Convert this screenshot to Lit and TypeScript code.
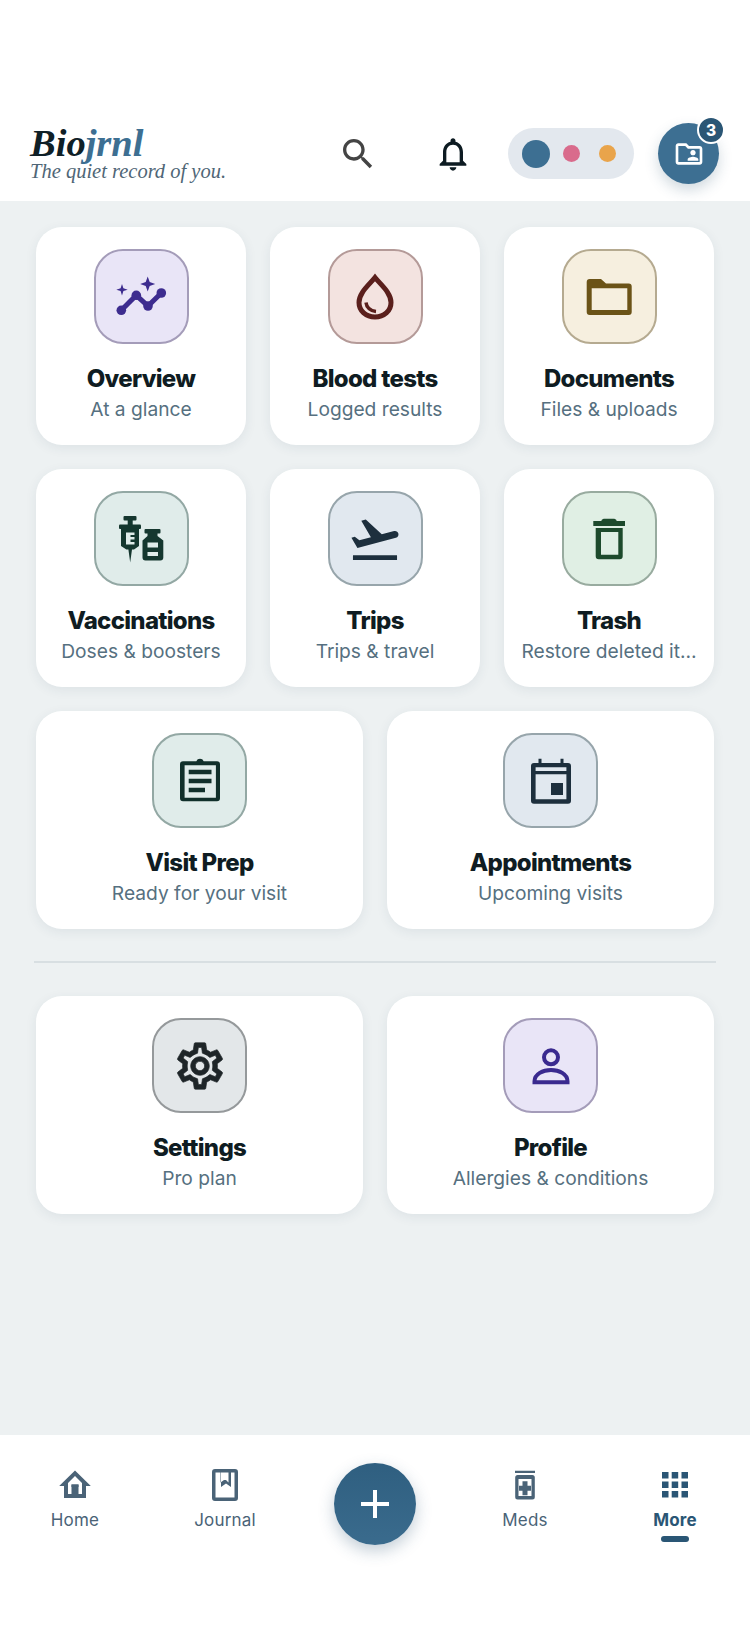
import { LitElement, html, css, svg } from 'lit';
import { customElement } from 'lit/decorators.js';

// 60x60 art for the tiles, drawn around the middle of the tile
const tileIcons = {
  overview: svg`<g fill="#3d2c8f">
      <path d="M36.700 9.500l2 5.500 5.500 2-5.500 2-2 5.500-2-5.500-5.500-2 5.500-2z"/>
      <path d="M11 17l1.400 4.300 4.300 1.400-4.300 1.400-1.400 4.300-1.400-4.300-4.300-1.400 4.300-1.400z"/>
      <circle cx="10.300" cy="43.300" r="4.800"/><circle cx="25.300" cy="28.300" r="4.800"/>
      <circle cx="37" cy="39" r="4.800"/><circle cx="50.300" cy="26" r="4.800"/>
    </g>
    <path d="M10.300 43.300L25.300 28.300 37 39 50.300 26" fill="none" stroke="#3d2c8f" stroke-width="5"/>`,
  blood: svg`<path d="M30 10.500C24.500 17.500 14 25.500 14 35.500 14 44 21 50 30 50s16-6 16-14.500C46 25.500 35.500 17.500 30 10.500z" fill="none" stroke="#5a1f1c" stroke-width="5"/>
    <path d="M21 35.500c.5 5 4.500 8.500 10 9" fill="none" stroke="#5a1f1c" stroke-width="3.500"/>`,
  documents: svg`<path fill="#6b5317" fill-rule="evenodd" d="M10.700 12H22l5 4.500h22.700a3 3 0 0 1 3 3V45a3 3 0 0 1-3 3h-39a3 3 0 0 1-3-3V15a3 3 0 0 1 3-3zM12.700 21.300V43h35.600V21.300z"/>`,
  vaccinations: svg`<g fill="#15372f">
      <rect x="12.500" y="7" width="13" height="4.500" rx="1"/><rect x="16.700" y="11" width="5" height="6"/>
      <rect x="8" y="15.500" width="22" height="4.500" rx="1"/>
      <path fill-rule="evenodd" d="M10 19h18v18l-5 3.500h-2l-1.800 13-1.800-13h-2L10 37zM15 23.500v12h8.500V33h-4v-2.500h4V28h-4v-2h4v-2.500z"/>
      <rect x="33.500" y="20" width="16" height="4.600" rx="1"/>
      <path fill-rule="evenodd" d="M36.500 24h10v3l5.800 4.500v17a3 3 0 0 1-3 3H34.500a3 3 0 0 1-3-3v-17l5-4.500zM36.500 33.500v5h10.500v-5zM36.500 43v4h10.500v-4z"/>
    </g>`,
  trips: svg`<g transform="translate(2.160 2.160) scale(2.320)"><path fill="#1d2f3d" d="M2.500 19h19v2h-19v-2zm19.570-9.360c-.21-.8-1.040-1.280-1.840-1.060L14.920 10l-6.900-6.430-1.930.51 4.140 7.170-4.970 1.330-1.970-1.540-1.450.39 2.590 4.490L21 11.490c.81-.23 1.280-1.050 1.070-1.850z"/></g>`,
  trash: svg`<path fill="#1d4a2c" fill-rule="evenodd" d="M22.300 12c.5-2 2-2.300 3.500-2.300h8.400c1.500 0 3 .3 3.500 2.300h8.300v5H14.300v-5zM16.700 19h27v28.300a3 3 0 0 1-3 3h-21a3 3 0 0 1-3-3zM22 23v22.700h17.300V23z"/>`,
  visit: svg`<path fill="#11302b" fill-rule="evenodd" d="M26.300 10.300a4 4 0 0 1 7.400 0H47a3 3 0 0 1 3 3v34a3 3 0 0 1-3 3H13a3 3 0 0 1-3-3v-34a3 3 0 0 1 3-3zM14.600 14.300v32.400h31.300V14.300zM18.700 18.700h22.800v4.600H18.700zM18.700 27.700h22.800v4.600H18.700zM18.700 36.700H35v4.600H18.700z"/>`,
  appointments: svg`<path fill="#1d2f3d" fill-rule="evenodd" d="M17.500 7.700h3V12h19V7.700h3V12H47a3 3 0 0 1 3 3v34.700a3 3 0 0 1-3 3H13a3 3 0 0 1-3-3V15a3 3 0 0 1 3-3h4.500zM14.600 16.300V20h30.800v-3.700zM14.600 23.300v25h30.800v-25zM30 32h12v12H30z"/>`,
  settings: svg`<g transform="translate(2.160 2.160) scale(2.320)"><path fill="#1e2528" stroke="#1e2528" stroke-width=".3" d="M19.430 12.980c.04-.32.07-.64.07-.98 0-.34-.03-.66-.07-.98l2.110-1.650c.19-.15.24-.42.120-.64l-2-3.460c-.09-.16-.26-.25-.44-.25-.06 0-.12.01-.17.03l-2.490 1c-.52-.4-1.080-.73-1.690-.98l-.38-2.650C14.460 2.180 14.250 2 14 2h-4c-.25 0-.46.18-.49.42l-.38 2.650c-.61.25-1.170.59-1.690.98l-2.490-1c-.06-.02-.12-.03-.18-.03-.17 0-.34.09-.43.25l-2 3.460c-.13.22-.07.49.12.64l2.110 1.650c-.04.32-.07.65-.07.98 0 .33.03.66.07.98l-2.110 1.650c-.19.15-.24.42-.12.64l2 3.460c.09.16.26.25.44.25.06 0 .12-.01.17-.03l2.490-1c.52.4 1.080.73 1.690.98l.38 2.650c.03.24.24.42.49.42h4c.25 0 .46-.18.49-.42l.38-2.650c.61-.25 1.170-.59 1.690-.98l2.490 1c.06.02.12.03.18.03.17 0 .34-.09.43-.25l2-3.460c.12-.22.07-.49-.12-.64l-2.110-1.650zm-1.980-1.710c.04.31.05.52.05.73 0 .21-.02.43-.05.73l-.14 1.130.89.7 1.080.84-.7 1.210-1.270-.51-1.040-.42-.9.68c-.43.32-.84.56-1.250.73l-1.060.43-.16 1.130-.2 1.350h-1.400l-.19-1.350-.16-1.130-1.060-.43c-.43-.18-.83-.41-1.230-.71l-.91-.7-1.060.43-1.270.51-.7-1.210 1.080-.84.89-.7-.14-1.130c-.03-.31-.05-.54-.05-.74s.02-.43.05-.73l.14-1.130-.89-.7-1.080-.84.7-1.210 1.270.51 1.040.42.9-.68c.43-.32.84-.56 1.250-.73l1.060-.43.16-1.130.2-1.350h1.390l.19 1.350.16 1.130 1.060.43c.43.18.83.41 1.230.71l.91.7 1.060-.43 1.270-.51.7 1.210-1.070.85-.89.7.14 1.130zM12 8c-2.210 0-4 1.790-4 4s1.790 4 4 4 4-1.790 4-4-1.790-4-4-4zm0 6c-1.100 0-2-.9-2-2s.9-2 2-2 2 .9 2 2-.9 2-2 2z"/></g>`,
  profile: svg`<g fill="none" stroke="#3a2a8f" stroke-width="4"><circle cx="30" cy="21.300" r="7"/><path d="M13.500 46.300v-1C13.500 38 22 34 30 34s16.500 4 16.500 11.300v1z"/></g>`,
};

// 36x36 art for the tab bar
const navIcons = {
  home: svg`<path fill="#4a6377" fill-rule="evenodd" d="M18 4.500L33.800 20H29v12H7V20H2.200zM18 10l-7 7v11h3.500v-9.500h7V28H25V17z"/><rect x="14.500" y="18.500" width="7" height="2.500" fill="#4a6377"/>`,
  journal: svg`<path fill="#4a6377" fill-rule="evenodd" d="M8 3h20a3 3 0 0 1 3 3v26a3 3 0 0 1-3 3H8a3 3 0 0 1-3-3V6a3 3 0 0 1 3-3zM8.500 6.500v25h19v-25h-3.500v14.500l-5-3.500-5 3.500V6.500zM13.500 6.500v10l3.500-2.500h2l2.500 2.500v-10z"/>`,
  meds: svg`<path fill="#4a6377" fill-rule="evenodd" d="M8 4.700h20V7H8zM10.700 9h14.600a2.500 2.500 0 0 1 2.500 2.500V31a2.500 2.500 0 0 1-2.500 2.500H10.700A2.500 2.500 0 0 1 8.200 31V11.500A2.500 2.500 0 0 1 10.700 9zM11.500 13v17h13V13zM15.500 15.200h5v4.500H25v5h-4.500v4.500h-5v-4.500H11v-5h4.500z"/>`,
  more: svg`<g fill="#2a5675"><rect x="5" y="6" width="6.500" height="6.500"/><rect x="14.700" y="6" width="6.500" height="6.500"/><rect x="24.500" y="6" width="6.500" height="6.500"/><rect x="5" y="15.500" width="6.500" height="6.500"/><rect x="14.700" y="15.500" width="6.500" height="6.500"/><rect x="24.500" y="15.500" width="6.500" height="6.500"/><rect x="5" y="25" width="6.500" height="6.500"/><rect x="14.700" y="25" width="6.500" height="6.500"/><rect x="24.500" y="25" width="6.500" height="6.500"/></g>`,
};

type Tile = { icon: keyof typeof tileIcons; title: string; sub: string; tone: string };

const topTiles: Tile[] = [
  { icon: 'overview', title: 'Overview', sub: 'At a glance', tone: 'violet' },
  { icon: 'blood', title: 'Blood tests', sub: 'Logged results', tone: 'rose' },
  { icon: 'documents', title: 'Documents', sub: 'Files & uploads', tone: 'sand' },
  { icon: 'vaccinations', title: 'Vaccinations', sub: 'Doses & boosters', tone: 'teal' },
  { icon: 'trips', title: 'Trips', sub: 'Trips & travel', tone: 'slate' },
  { icon: 'trash', title: 'Trash', sub: 'Restore deleted it…', tone: 'green' },
];
const midTiles: Tile[] = [
  { icon: 'visit', title: 'Visit Prep', sub: 'Ready for your visit', tone: 'teal' },
  { icon: 'appointments', title: 'Appointments', sub: 'Upcoming visits', tone: 'slate' },
];
const lowTiles: Tile[] = [
  { icon: 'settings', title: 'Settings', sub: 'Pro plan', tone: 'grey' },
  { icon: 'profile', title: 'Profile', sub: 'Allergies & conditions', tone: 'violet' },
];

@customElement('app-root')
export class AppRoot extends LitElement {
  static styles = css`
    :host {
      display: flex;
      flex-direction: column;
      width: 750px;
      height: 1630px;
      background: #edf1f2;
      font-family: Inter, "Noto Sans", sans-serif;
      overflow: hidden;
    }
    .top {
      display: flex;
      align-items: center;
      height: 61px;
      padding: 123px 31px 17px 30px;
      background: #fff;
    }
    .logo {
      flex: 1;
      padding-bottom: 1px;
      font-family: "Liberation Serif", serif;
      font-style: italic;
    }
    .name {
      font-size: 38.500px;
      font-weight: 700;
      line-height: 36px;
      color: #0f2027;
    }
    .name span {
      color: #3d6f92;
    }
    .tag {
      font-size: 20.500px;
      line-height: 20px;
      color: #4f6676;
    }
    .tool {
      display: flex;
      justify-content: center;
      width: 95px;
    }
    .pill {
      display: flex;
      align-items: center;
      gap: 19px;
      box-sizing: border-box;
      width: 126px;
      height: 51px;
      margin-left: 8px;
      padding-left: 14px;
      border-radius: 26px;
      background: #e3e8ee;
    }
    .pill i {
      width: 17px;
      height: 17px;
      border-radius: 50%;
    }
    .pill i.big {
      width: 28px;
      height: 28px;
      margin-right: -6px;
      background: #3d6f92;
    }
    .pill i.pink {
      background: #d96b8c;
    }
    .pill i.amber {
      background: #e9a44b;
    }
    .files {
      position: relative;
      display: flex;
      align-items: center;
      justify-content: center;
      width: 61px;
      height: 61px;
      margin-left: 24px;
      border-radius: 50%;
      background: #3d6f92;
      box-shadow: 0 6px 14px rgba(40, 80, 110, 0.22);
    }
    .badge {
      position: absolute;
      top: -7px;
      right: -6px;
      display: flex;
      align-items: center;
      justify-content: center;
      box-sizing: border-box;
      width: 28px;
      height: 28px;
      border: 2.500px solid #fff;
      border-radius: 50%;
      background: #2a5675;
      color: #fff;
      font-size: 15.500px;
      font-weight: 800;
    }
    main {
      flex: 1;
      display: flex;
      flex-direction: column;
      gap: 24px;
      padding: 26px 36px 0;
    }
    .grid {
      display: grid;
      gap: 24px;
    }
    .three {
      grid-template-columns: repeat(3, 210px);
    }
    .two {
      grid-template-columns: repeat(2, 327px);
    }
    hr {
      width: 682px;
      height: 2px;
      margin: 8px -2px 9px;
      border: 0;
      background: #d8dfe2;
    }
    .card {
      display: flex;
      flex-direction: column;
      align-items: center;
      box-sizing: border-box;
      height: 218px;
      min-width: 0;
      padding: 22px 16px 0;
      border-radius: 26px;
      background: #fff;
      box-shadow: 0 3px 12px rgba(40, 70, 90, 0.08);
    }
    .box {
      display: flex;
      align-items: center;
      justify-content: center;
      box-sizing: border-box;
      width: 95px;
      height: 95px;
      border: 2px solid;
      border-radius: 29px;
    }
    .violet { background: #e9e5f7; border-color: #a49cb9; }
    .rose { background: #f3e3e0; border-color: #b49a98; }
    .sand { background: #f6efdf; border-color: #b5aa90; }
    .teal { background: #e0ecea; border-color: #93a8a4; }
    .slate { background: #e1e8ef; border-color: #97a5ab; }
    .green { background: #e0efe4; border-color: #98ab9f; }
    .grey { background: #e3e7e9; border-color: #95999b; }
    .title {
      margin-top: 20px;
      font-size: 24px;
      font-weight: 800;
      line-height: 30px;
      letter-spacing: -0.7px;
      color: #0f1c22;
    }
    .sub {
      margin-top: 2px;
      font-size: 19.200px;
      line-height: 26px;
      white-space: nowrap;
      color: #567080;
    }
    nav {
      display: grid;
      grid-template-columns: repeat(5, 150px);
      height: 195px;
      background: #fff;
    }
    .tab {
      display: flex;
      flex-direction: column;
      align-items: center;
      padding-top: 31px;
      font-size: 17px;
      line-height: 20px;
      letter-spacing: 0.2px;
      color: #4a6377;
    }
    .tab span {
      margin-top: 8px;
    }
    .tab.on {
      font-weight: 700;
      color: #2a5675;
    }
    .tab b {
      width: 28px;
      height: 5.500px;
      margin-top: 6px;
      border-radius: 3px;
      background: #2a5675;
    }
    .fab {
      display: flex;
      align-items: center;
      justify-content: center;
      justify-self: center;
      width: 82px;
      height: 82px;
      margin-top: 28px;
      border-radius: 50%;
      background: linear-gradient(#2f5f80, #3a6b8d);
      box-shadow: 0 6px 16px rgba(40, 80, 110, 0.28);
    }
  `;

  private renderTile(t: Tile) {
    return html`
      <div class="card">
        <div class="box ${t.tone}">
          <svg width="60" height="60" viewBox="0 0 60 60">${tileIcons[t.icon]}</svg>
        </div>
        <div class="title">${t.title}</div>
        <div class="sub">${t.sub}</div>
      </div>
    `;
  }

  private renderTab(icon: keyof typeof navIcons, label: string, on = false) {
    return html`
      <div class="tab ${on ? 'on' : ''}">
        <svg width="36" height="36" viewBox="0 0 36 36">${navIcons[icon]}</svg>
        <span>${label}</span>
        ${on ? html`<b></b>` : ''}
      </div>
    `;
  }

  render() {
    return html`
      <header class="top">
        <div class="logo">
          <div class="name">Bio<span>jrnl</span></div>
          <div class="tag">The quiet record of you.</div>
        </div>
        <div class="tool">
          <svg width="40" height="40" viewBox="0 0 24 24"><path fill="#444" d="M15.500 14h-.79l-.28-.27C15.410 12.590 16 11.110 16 9.500 16 5.910 13.090 3 9.500 3S3 5.910 3 9.500 5.910 16 9.500 16c1.610 0 3.090-.59 4.230-1.570l.27.28v.79l5 4.990L20.490 19l-4.990-5zm-6 0C7.010 14 5 11.990 5 9.500S7.010 5 9.500 5 14 7.010 14 9.500 11.990 14 9.500 14z"/></svg>
        </div>
        <div class="tool">
          <svg width="40" height="40" viewBox="0 0 24 24"><path fill="#0d1b22" d="M12 22c1.100 0 2-.9 2-2h-4c0 1.100.9 2 2 2zm6-6v-5c0-3.070-1.630-5.640-4.500-6.320V4c0-.83-.67-1.500-1.500-1.500s-1.500.67-1.500 1.500v.68C7.640 5.360 6 7.920 6 11v5l-2 2v1h16v-1l-2-2zm-2 1H8v-6c0-2.480 1.510-4.500 4-4.500s4 2.020 4 4.500v6z"/></svg>
        </div>
        <div class="pill"><i class="big"></i><i class="pink"></i><i class="amber"></i></div>
        <div class="files">
          <svg width="32" height="32" viewBox="0 0 24 24"><path fill="#fff" d="M20 6h-8l-2-2H4c-1.100 0-1.990.9-1.990 2L2 18c0 1.100.9 2 2 2h16c1.100 0 2-.9 2-2V8c0-1.100-.9-2-2-2zm0 12H4V6h5.170l2 2H20v10zm-5-5c1.100 0 2-.9 2-2s-.9-2-2-2-2 .9-2 2 .9 2 2 2zm-4 4h8v-1c0-1.330-2.670-2-4-2s-4 .67-4 2v1z"/></svg>
          <div class="badge">3</div>
        </div>
      </header>
      <main>
        <div class="grid three">${topTiles.map((t) => this.renderTile(t))}</div>
        <div class="grid two">${midTiles.map((t) => this.renderTile(t))}</div>
        <hr />
        <div class="grid two">${lowTiles.map((t) => this.renderTile(t))}</div>
      </main>
      <nav>
        ${this.renderTab('home', 'Home')}
        ${this.renderTab('journal', 'Journal')}
        <div class="fab">
          <svg width="34" height="34" viewBox="0 0 34 34"><path fill="#fff" d="M15 3h4v12h12v4H19v12h-4V19H3v-4h12z"/></svg>
        </div>
        ${this.renderTab('meds', 'Meds')}
        ${this.renderTab('more', 'More', true)}
      </nav>
    `;
  }
}
